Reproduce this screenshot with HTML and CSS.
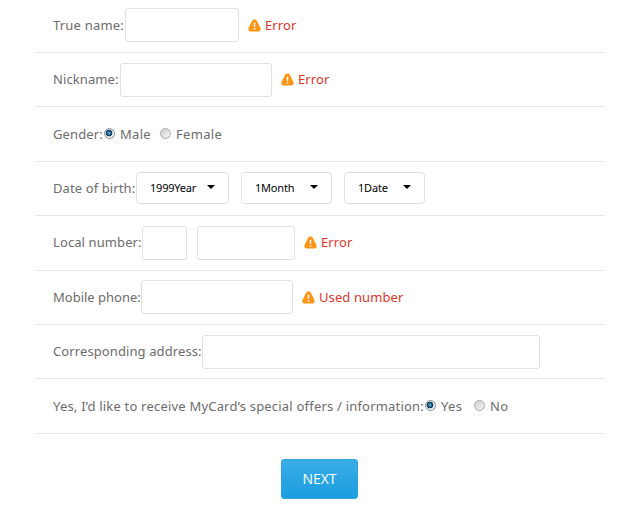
FILE: index.html
```html
<!DOCTYPE html>
<html lang="en">
<head>
  <meta charset="UTF-8">
  <meta name="viewport" content="width=device-width, initial-scale=1.0">
  <title>MyCard</title>
  <link rel="stylesheet" href="styles.css">
</head>
<body>
  <svg width="0" height="0" class="defs">
    <symbol id="warn" viewBox="0 0 13 13">
      <path d="M6.5 0.6C7.8 0.6 8.6 1.2 9.1 2.2L12.2 8.6C13.1 10.8 12.3 12.4 10.4 12.4H2.6C0.7 12.4 -0.1 10.8 0.8 8.6L3.9 2.2C4.4 1.2 5.2 0.6 6.5 0.6Z" fill="#ff9413"/>
      <path d="M5.6 3.8H7.4L7.1 8H5.9ZM5.7 9H7.3V10.5H5.7Z" fill="#fff"/>
    </symbol>
  </svg>

  <form class="form">
    <div class="row">
      <label class="name w-true" for="trueName">True name:</label>
      <input type="text" class="field f-true" id="trueName">
      <span class="error"><svg class="icon"><use href="#warn"/></svg>Error</span>
    </div>
    <div class="row">
      <label class="name w-nick" for="nickname">Nickname:</label>
      <input type="text" class="field f-mid" id="nickname">
      <span class="error"><svg class="icon"><use href="#warn"/></svg>Error</span>
    </div>
    <div class="row">
      <span class="name w-gender">Gender:</span>
      <label class="option male"><input type="radio" name="gender" checked>Male</label>
      <label class="option"><input type="radio" name="gender">Female</label>
    </div>
    <div class="row">
      <span class="name w-birth">Date of birth:</span>
      <button type="button" class="select year">1999Year<i class="arrow"></i></button>
      <button type="button" class="select month">1Month<i class="arrow"></i></button>
      <button type="button" class="select date">1Date<i class="arrow"></i></button>
    </div>
    <div class="row">
      <label class="name w-local" for="area">Local number:</label>
      <input type="text" class="field f-area" id="area">
      <input type="text" class="field f-local">
      <span class="error"><svg class="icon"><use href="#warn"/></svg>Error</span>
    </div>
    <div class="row">
      <label class="name w-mobile" for="mobile">Mobile phone:</label>
      <input type="text" class="field f-mid" id="mobile">
      <span class="error"><svg class="icon"><use href="#warn"/></svg>Used number</span>
    </div>
    <div class="row">
      <label class="name w-address" for="address">Corresponding address:</label>
      <input type="text" class="field f-address" id="address">
    </div>
    <div class="row">
      <span class="name w-offers">Yes, I’d like to receive MyCard’s special offers / information:</span>
      <label class="option yes"><input type="radio" name="offers" checked>Yes</label>
      <label class="option"><input type="radio" name="offers">No</label>
    </div>
    <button type="button" class="next">NEXT</button>
  </form>
</body>
</html>
```

FILE: styles.css
```css
* {
  box-sizing: border-box;
}
body {
  margin: 0;
  background: #fff;
  color: #6c6c6c;
  font: 13px/20px "Noto Sans", Verdana, sans-serif;
  letter-spacing: 0.1px;
  overflow: hidden;
}
.defs {
  display: block;
}
.form {
  width: 570px;
  margin: -1.4px 0 0 35px;
}
.row {
  display: flex;
  align-items: center;
  height: 54.4px;
  padding-left: 18px;
  border-bottom: 1px solid #e8e8e8;
}
.name {
  flex: none;
  margin-top: -1px;
  white-space: nowrap;
}
.w-true { width: 72px; letter-spacing: 0.2px; }
.w-nick { width: 67px; }
.w-gender { width: 51px; }
.w-birth { width: 83px; }
.w-local { width: 89px; }
.w-mobile { width: 88px; letter-spacing: 0; }
.w-address { width: 149px; }
.w-offers { width: 372px; letter-spacing: 0.2px; }

.field {
  height: 34px;
  padding: 0 8px;
  border: 1px solid #e1e1e1;
  border-radius: 3px;
  background: #fff;
  font: inherit;
  color: inherit;
}
.f-true { width: 114px; }
.f-mid { width: 152px; }
.f-area { width: 45px; margin-right: 10px; }
.f-local { width: 98px; }
.f-address { width: 338px; }

.error {
  display: flex;
  align-items: center;
  margin: -1px 0 0 9px;
  color: #e0352b;
}
.icon {
  width: 13px;
  height: 13px;
  margin: 1px 4px 0 0;
}

.option {
  display: flex;
  align-items: center;
  letter-spacing: 0.3px;
}
.option input {
  appearance: none;
  width: 11px;
  height: 11px;
  margin: -2px 5px 0 0;
  border: 1px solid #aaa;
  border-radius: 50%;
  background: linear-gradient(135deg, #ccc, #f8f8f8);
}
.option input:checked {
  border-color: #8a9299;
  background: radial-gradient(circle at 4px 4px, #6fc3e8 0, #1b5a80 2px, #12364f 3px, #e8edf0 3.7px);
}
.male { width: 56px; }
.yes { width: 49px; }

.select {
  display: flex;
  align-items: center;
  justify-content: space-between;
  height: 32px;
  margin: -1px 12px 0 0;
  padding: 0 13px 1px;
  border: 1px solid #e1e1e1;
  border-radius: 4px;
  background: #fff;
  color: #000;
  font: 11px "Noto Sans", sans-serif;
  letter-spacing: -0.2px;
}
.year { width: 93px; }
.month { width: 91px; }
.date { width: 81px; }
.arrow {
  border: 4px solid transparent;
  border-top-color: #000;
  border-bottom: 0;
}

.next {
  display: block;
  width: 77px;
  height: 40px;
  margin: 25px 0 0 246px;
  padding: 0;
  border: 1px solid #2fa2de;
  border-radius: 3px;
  background: linear-gradient(#3aaee6, #1b9de0);
  color: #fff;
  font: 14px "Open Sans", sans-serif;
}
```
